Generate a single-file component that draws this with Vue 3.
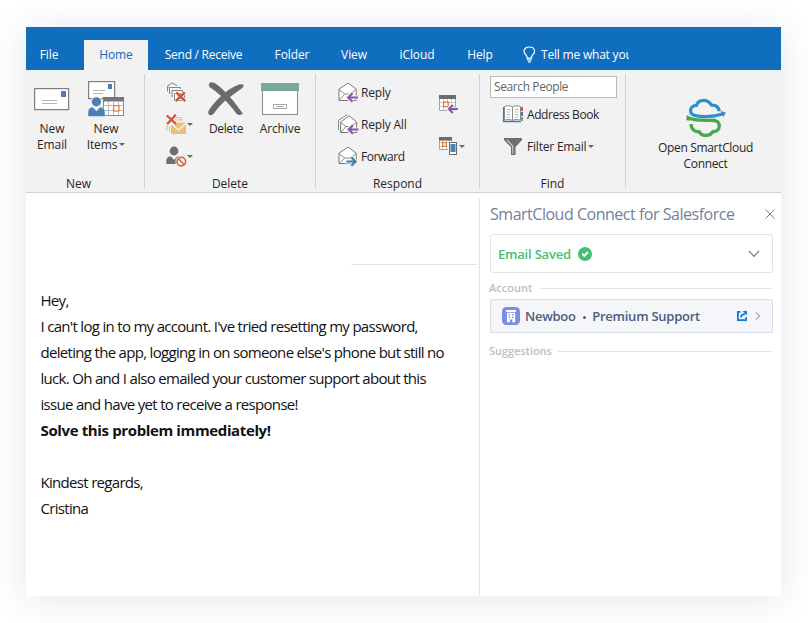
<script setup>
const tabs = [
  { label: 'File', width: 46, cls: '' },
  { label: 'Home', width: 64, cls: 'active' },
  { label: 'Send / Receive', width: 111, cls: 'long' },
  { label: 'Folder', width: 66, cls: '' },
  { label: 'View', width: 58, cls: '' },
  { label: 'iCloud', width: 68, cls: '' },
  { label: 'Help', width: 58, cls: '' },
]
const body = [
  'Hey,',
  "I can't log in to my account. I've tried resetting my password,",
  "deleting the app, logging in on someone else's phone but still no",
  'luck. Oh and I also emailed your customer support about this',
  'issue and have yet to receive a response!',
]
</script>

<template>
  <div class="stage">
  <div class="window">
    <header class="titlebar">
      <nav class="tabs">
        <span v-for="t in tabs" :key="t.label" class="tab" :class="t.cls" :style="{ width: t.width + 'px' }">{{ t.label }}</span>
      </nav>
      <div class="tell">
        <svg width="13" height="17" viewBox="0 0 13 17" fill="none" stroke="#fff">
          <path d="M4 12.2V10.6C3.6 9.2 1 8 1 5.3C1 2.7 3.3 1 6.3 1S11.6 2.7 11.6 5.3C11.6 8 9 9.2 8.6 10.6V12.2Z" stroke-width="1.2" />
          <path d="M4 13.9H8.6M5 15.9H7.8" stroke-width="1.1" />
        </svg>
        <span class="tell-text">Tell me what you</span>
      </div>
    </header>

    <section class="ribbon">
      <div class="group g-new">
        <div class="tools">
          <div class="big new-email">
            <svg width="36" height="40" viewBox="0 0 36 40">
              <rect x="0.6" y="11.6" width="34" height="21" fill="#fff" stroke="#7f7f7f" stroke-width="1.2" />
              <rect x="27" y="14" width="5" height="6" fill="#4a7fb8" />
              <path d="M8 23.5H23M8 26.5H23" stroke="#b5b5b5" />
            </svg>
            <span>New<br />Email</span>
          </div>
          <div class="big new-items">
            <svg width="37" height="40" viewBox="0 0 37 40">
              <rect x="0.6" y="4.6" width="26" height="17" fill="#fff" stroke="#7f7f7f" stroke-width="1.2" />
              <rect x="20" y="7" width="4" height="5" fill="#4a7fb8" />
              <path d="M5 13.5H17M5 16.5H15" stroke="#b5b5b5" />
              <circle cx="8.5" cy="25" r="5.8" fill="#f2f2f2" />
              <circle cx="8.4" cy="24.8" r="4.6" fill="#4a7fb8" />
              <rect x="15.5" y="20.5" width="20" height="18" fill="#fff" stroke="#8a8a8a" />
              <path d="M15 20H36V24.5H15Z" fill="#777" />
              <path d="M20.5 24V38M25.5 24V38M30.5 24V38M16 28.5H35M16 33.5H35" stroke="#b9b9b9" />
              <rect x="25.6" y="28.6" width="5.4" height="5.4" fill="#fff" stroke="#e2813c" stroke-width="1.3" />
              <path d="M0 39.5V35C0 32 2 30.3 4.8 30L8.5 34L12.2 30C15 30.3 17 32 17 35V39.5Z" fill="#4a7fb8" stroke="#f2f2f2" stroke-width="0.5" />
            </svg>
            <span>New<br />Items<i class="caret"></i></span>
          </div>
        </div>
        <div class="caption">New</div>
      </div>

      <div class="group g-delete">
        <div class="tools">
          <div class="smallcol">
            <div class="small">
              <svg width="21" height="21" viewBox="0 0 21 21" fill="none" stroke="#858585">
                <path d="M1.5 9.5V4L6 1L11 3.5M1.5 4.5L3 5.5" />
                <path d="M3.5 12V5.5H14.5V7M6 15V8.5H16.5V10" />
                <path d="M18.5 11.5H8.5V18.5H18.5Z" fill="#fff" />
                <path d="M10.5 10.5L19 19M18.5 10.5L10 19" stroke="#f2f2f2" stroke-width="3.8" />
                <path d="M10.3 10.3L19.2 19.2M18.7 10.3L9.8 19.2" stroke="#d6502e" stroke-width="2.5" />
              </svg>
            </div>
            <div class="small">
              <svg width="21" height="21" viewBox="0 0 21 21">
                <path d="M1 10V16.5M3.5 12V18M9 3.5H15V6M9 6H17" fill="none" stroke="#e7bd74" />
                <path d="M5 8.5H20V20H5Z" fill="#e9c07b" />
                <path d="M5 9.5L12.5 16L20 9.5" fill="none" stroke="#fff5e3" stroke-width="1.2" />
                <path d="M1 2L10 10M9.5 1L1.5 10" stroke="#f2f2f2" stroke-width="4" />
                <path d="M.8 1.5L10 10M9.8 .8L1.2 10" stroke="#d6502e" stroke-width="2.2" />
              </svg>
              <i class="caret"></i>
            </div>
            <div class="small">
              <svg width="21" height="21" viewBox="0 0 21 21">
                <circle cx="8" cy="5" r="4.4" fill="#6e6e6e" />
                <path d="M.3 18V14.5C.3 11.5 2.3 10.5 4.8 10.2L8 14L11.2 10.2C14 10.5 15.5 11.5 15.5 14.5V18Z" fill="#6e6e6e" />
                <circle cx="15.3" cy="15.6" r="5.9" fill="#f2f2f2" />
                <circle cx="15.3" cy="15.6" r="4.3" fill="none" stroke="#dc6144" stroke-width="1.6" />
                <path d="M12.2 12.5L18.4 18.7" stroke="#dc6144" stroke-width="1.6" />
              </svg>
              <i class="caret"></i>
            </div>
          </div>
          <div class="big delete">
            <svg width="37" height="40" viewBox="0 0 37 40" fill="#6b6b6b">
              <path d="M1.3 6.2C3 4.6 5.8 5.4 8.4 7.2C17.4 13.6 26 24 35 36.8C32.8 38.2 30.2 38.4 28.3 36.4C20.5 26 12.6 17.5 2.4 10.8C1 9.8.2 7.8 1.3 6.2Z" />
              <path d="M35.6 8.2C35.9 10 34 11.3 31.2 13.2C20.4 20.8 13 26.2 6.4 35.8C4.8 38.4 2 39 .7 37.2C-.4 35.6.6 33.6 2 31.6C10.3 20.2 20.5 11.6 31 7.6C33 6.9 35.2 7 35.6 8.2Z" />
            </svg>
            <span>Delete</span>
          </div>
          <div class="big archive">
            <svg width="38" height="40" viewBox="0 0 38 40">
              <rect x="1.5" y="12.5" width="35" height="25" fill="#fff" stroke="#8b8b8b" />
              <rect x="0" y="6" width="38" height="8" fill="#7aa899" />
              <rect x="12.5" y="27.5" width="13" height="4" fill="#fff" stroke="#aaa" />
              <path d="M15 29.5H23" stroke="#b5b5b5" />
            </svg>
            <span>Archive</span>
          </div>
        </div>
        <div class="caption">Delete</div>
      </div>

      <div class="group g-respond">
        <div class="tools">
          <div class="rows">
            <div class="row">
              <svg width="20" height="21" viewBox="0 0 20 21">
                <path d="M1 7.2L10 1L18.2 7.2V18.5H1Z" fill="#fff" stroke="#777" />
                <path d="M1.2 7.5L6.8 12.3M18 7.5L12 12.3M1.2 18.3L6.8 12H12.5" fill="none" stroke="#888" />
                <path d="M9.5 15.5H20M14.5 10.8L9.8 15.5L14.5 20.2" fill="none" stroke="#f2f2f2" stroke-width="4" />
                <path d="M10.5 15.5H20M14.5 11.3L10.3 15.5L14.5 19.7" fill="none" stroke="#8857ae" stroke-width="2.2" />
              </svg>
              <span class="t-reply">Reply</span>
            </div>
            <div class="row">
              <svg width="20" height="21" viewBox="0 0 20 21">
                <path d="M.5 16V6.2L9 .7" fill="none" stroke="#888" />
                <path d="M2.6 8.2L11 1.8L18.6 7.8V18.5H2.6Z" fill="#fff" stroke="#777" />
                <path d="M2.8 8.5L8 12.8M18.4 8.5L13 12.6M2.8 18.3L8 12.5H13" fill="none" stroke="#888" />
                <path d="M10 15.5H20M14.5 10.8L10.2 15.5L14.5 20.2" fill="none" stroke="#f2f2f2" stroke-width="4" />
                <path d="M11 15.5H20.5M15 11.3L10.8 15.5L15 19.7" fill="none" stroke="#8857ae" stroke-width="2.2" />
              </svg>
              <span class="t-all">Reply All</span>
            </div>
            <div class="row">
              <svg width="20" height="21" viewBox="0 0 20 21">
                <path d="M1 7.2L10 1L18.2 7.2V17.5H1Z" fill="#fff" stroke="#777" />
                <path d="M1.2 7.5L6.8 12.3M18 7.5L12 12.3M1.2 17.3L6.8 12H12.5" fill="none" stroke="#888" />
                <path d="M7.5 15.5H17.5M13 10.8L17.7 15.5L13 20.2" fill="none" stroke="#f2f2f2" stroke-width="4" />
                <path d="M8.5 15.5H17.5M13.3 11.3L17.5 15.5L13.3 19.7" fill="none" stroke="#3f7cb5" stroke-width="2.2" />
              </svg>
              <span class="t-forward">Forward</span>
            </div>
          </div>
          <div class="minis">
            <svg width="19" height="19" viewBox="0 0 19 19">
              <path d="M.5 3.5H16.5V15.5H.5Z" fill="#fff" stroke="#a5a5a5" />
              <path d="M0 0H17V4H0Z" fill="#6b6b6b" />
              <path d="M4.5 4V15M8.5 4V15M12.5 4V15M1 7.5H16M1 11.5H16" stroke="#c6c6c6" />
              <rect x="4.6" y="7" width="4.6" height="4.6" fill="#fff" stroke="#e07a2e" stroke-width="1.3" />
              <path d="M9 14H19M13.5 9.5L9 14L13.5 18.5" fill="none" stroke="#f2f2f2" stroke-width="3.6" />
              <path d="M10 14H19M13.8 10L9.8 14L13.8 18" fill="none" stroke="#8857ae" stroke-width="2.1" />
            </svg>
            <div class="mini-row">
              <svg width="19" height="19" viewBox="0 0 19 19">
                <path d="M.5 3H12.5V12.5H.5Z" fill="#fff" stroke="#a5a5a5" />
                <path d="M0 0H13V3.5H0Z" fill="#6b6b6b" />
                <path d="M3.5 4V12M7.5 4V12M1 5.5H12M1 9.5H12" stroke="#c6c6c6" />
                <rect x="3.6" y="5.6" width="3.6" height="3.6" fill="#fff" stroke="#e07a2e" stroke-width="1.2" />
                <rect x="9.2" y="4.2" width="9.4" height="14.4" fill="#f2f2f2" />
                <rect x="10.5" y="5.5" width="7" height="12" fill="#fff" stroke="#6b6b6b" />
                <rect x="11.5" y="7" width="5" height="8" fill="#4a7fb8" />
              </svg>
              <i class="caret"></i>
            </div>
          </div>
        </div>
        <div class="caption">Respond</div>
      </div>

      <div class="group g-find">
        <div class="find-tools">
          <div class="search">Search People</div>
          <div class="row">
            <svg width="20" height="19" viewBox="0 0 20 19">
              <path d="M.6 2V16.5H18" fill="none" stroke="#3f7cb5" stroke-width="1.4" />
              <path d="M1.5 1.5C4 .5 8 .5 9.5 2C11 .5 15 .5 17.5 1.5V15C15 14.3 11 14.3 9.5 15.5C8 14.3 4 14.3 1.5 15Z" fill="#fff" stroke="#8a8a8a" />
              <path d="M9.5 2V15.5" stroke="#8a8a8a" />
              <path d="M3.5 4.5H7.5M3.5 7H7.5M3.5 9.5H7.5M3.5 12H7.5M11.5 4.5H15.5M11.5 7H15.5M11.5 9.5H15.5M11.5 12H15.5" stroke="#b5b5b5" stroke-width=".9" />
              <path d="M18 2H20V6H18Z" fill="#d6502e" />
              <path d="M18 7H20V11H18Z" fill="#3f7cb5" />
              <path d="M18 12H20V16H18Z" fill="#5aa98b" />
            </svg>
            <span class="t-book">Address Book</span>
          </div>
          <div class="row">
            <svg width="20" height="19" viewBox="0 0 20 19">
              <path d="M1 1H19V3L12.5 10V18H8V10L1 3Z" fill="#6e6e6e" />
              <path d="M4 2.8L9.8 9.2V16.8" fill="none" stroke="#d5d5d5" stroke-width="1.1" />
            </svg>
            <span class="t-filter">Filter Email<i class="caret"></i></span>
          </div>
        </div>
        <div class="caption">Find</div>
      </div>

      <div class="group g-scc">
        <svg width="42" height="40" viewBox="0 0 42 40" fill="none" stroke-width="3.3" stroke-linejoin="round">
          <path d="M34.2 13.2C33.6 9.2 30.8 7 26.5 7.2C24.5 3.8 21.8 2.4 18.8 2.4C15.2 2.4 12.4 4.3 11.6 7.4C8 7.5 5.5 9.5 5.5 12.7C5.5 16.4 9 17.8 15 18.3C22 18.9 30 18.6 37.5 16" stroke="#2b93c7" />
          <path d="M35.8 13.1L40.8 14.6L38.4 19.2L38 17.8L36.8 18Z" fill="#2b93c7" />
          <path d="M4 20C11 22.9 17 22.5 25 22.3C31 22 34.3 23.6 34.3 28C34.3 31.7 31.5 33.9 27.8 33.6C26.4 36.1 23.5 37.5 20 37.3C17.4 37.2 15.3 35.8 14.2 33.7C9.7 34 6.2 31.5 6.1 26" stroke="#48a550" />
          <path d="M1.2 22L1.8 17L6 19.5L4.6 20.7L4.5 23Z" fill="#48a550" />
        </svg>
        <span>Open SmartCloud<br />Connect</span>
      </div>
    </section>

    <main class="content">
      <article class="mail">
        <div class="rule"></div>
        <div class="message">
          <p v-for="line in body" :key="line">{{ line }}</p>
          <p class="strong">Solve this problem immediately!</p>
          <p class="gap">Kindest regards,</p>
          <p>Cristina</p>
        </div>
      </article>

      <aside class="panel">
        <div class="panel-head">
          <h1>SmartCloud Connect for Salesforce</h1>
          <svg width="10" height="10" viewBox="0 0 10 10" stroke="#71819b" stroke-width="1"><path d="M.5 .5L9.5 9.5M9.5 .5L.5 9.5" /></svg>
        </div>
        <div class="saved">
          <span>Email Saved</span>
          <svg width="14" height="14" viewBox="0 0 14 14"><circle cx="7" cy="7" r="7" fill="#45bf74" /><path d="M4.2 6.8L6.3 8.8L9.9 5" fill="none" stroke="#fff" stroke-width="1.9" /></svg>
          <svg class="end" width="12" height="8" viewBox="0 0 12 8" fill="none" stroke="#71819b" stroke-width="1.2"><path d="M1 1L6 6.3L11 1" /></svg>
        </div>
        <div class="section account"><span>Account</span></div>
        <div class="record">
          <svg width="18" height="18" viewBox="0 0 18 18">
            <rect width="18" height="18" rx="4.5" fill="#7f8de1" />
            <path d="M4 3H14V5H4ZM5 5.8H13.2V15.2H10.3V12.5H7.8V15.2H5Z" fill="#fff" />
            <path d="M6.6 7H8V8.5H6.6ZM10 7H11.4V8.5H10ZM6.6 9.8H8V11.2H6.6ZM10 9.8H11.4V11.2H10Z" fill="#7f8de1" />
          </svg>
          <span class="name">Newboo</span><i class="dot"></i><span class="tier">Premium Support</span>
          <svg class="open" width="10" height="10" viewBox="0 0 10 10" fill="none" stroke="#0b7bd8" stroke-width="1.8">
            <path d="M3.5 .9H.9V9.1H9.1V6.3" />
            <path d="M4 6.4C4 4.3 5 3.2 8 3.1" />
            <path d="M5.6 0H10V4.6Z" fill="#0b7bd8" stroke="none" />
          </svg>
          <svg width="6" height="8" viewBox="0 0 6 8" fill="none" stroke="#71819b"><path d="M.8 .5L4.8 4L.8 7.5" /></svg>
        </div>
        <div class="section suggestions"><span>Suggestions</span></div>
      </aside>
    </main>
  </div>
  </div>
</template>

<style>
body {
  background: #fff;
}
</style>

<style scoped>
* {
  box-sizing: border-box;
}
svg {
  display: block;
  flex: none;
  overflow: visible;
}
.stage {
  width: 808px;
  height: 623px;
  padding: 27px 0 0 26px;
  overflow: hidden;
}
.window {
  width: 755px;
  height: 569px;
  display: flex;
  flex-direction: column;
  background: #fff;
  box-shadow: 0 3px 36px rgba(50, 65, 105, 0.13);
  font-family: "Open Sans", "Noto Sans", sans-serif;
  font-size: 12px;
  color: #262626;
  white-space: nowrap;
}
.titlebar {
  height: 43px;
  flex: none;
  background: #106ebe;
  display: flex;
  align-items: flex-end;
  color: #fff;
}
.tabs {
  display: flex;
}
.tab {
  height: 30px;
  line-height: 30px;
  text-align: center;
  letter-spacing: -0.1px;
}
.tab.long {
  letter-spacing: -0.25px;
}
.tab:first-child {
  margin-right: 12px;
}
.tab.active {
  background: #f2f2f2;
  color: #106ebe;
}
.tell {
  height: 30px;
  display: flex;
  align-items: center;
  gap: 5px;
  margin-left: 14px;
}
.tell svg {
  margin-top: -2px;
}
.tell-text {
  width: 88px;
  line-height: 30px;
  overflow: hidden;
  letter-spacing: -0.2px;
}
.ribbon {
  height: 123px;
  flex: none;
  display: flex;
  padding: 4px 0;
  background: #f2f2f2;
  border-bottom: 1px solid #d2d2d2;
}
.group {
  height: 114px;
  display: flex;
  flex-direction: column;
  border-right: 1px solid #d2d2d2;
}
.g-new { width: 119px; }
.g-delete { width: 171px; }
.g-respond { width: 164px; }
.g-find { width: 146px; }
.g-scc {
  width: 155px;
  border-right: 0;
  align-items: center;
  padding: 24px 0 0 4px;
  text-align: center;
  line-height: 16px;
  letter-spacing: -0.33px;
}
.g-scc span {
  margin-top: 2px;
}
.tools {
  height: 102px;
  flex: none;
  display: flex;
}
.caption {
  height: 12px;
  flex: none;
  line-height: 16px;
  text-align: center;
}
.g-new .caption {
  padding-right: 13px;
}
.big {
  display: flex;
  flex-direction: column;
  align-items: center;
  text-align: center;
  line-height: 16px;
  padding-top: 3px;
  letter-spacing: -0.1px;
}
.big span {
  margin-top: 4px;
}
.new-email {
  width: 52px;
}
.new-items {
  width: 56px;
}
.caret {
  display: inline-block;
  width: 0;
  height: 0;
  border: 3px solid transparent;
  border-top-color: #666;
  border-bottom: 0;
  margin-left: 2px;
  vertical-align: 3px;
}
.smallcol {
  width: 58px;
  padding: 8px 0 0 21px;
  display: flex;
  flex-direction: column;
  gap: 11px;
}
.small {
  display: flex;
  align-items: center;
}
.small .caret {
  margin-left: 0;
}
.delete {
  width: 46px;
  letter-spacing: -0.35px;
}
.archive {
  width: 62px;
}
.rows {
  width: 123px;
  padding: 8px 0 0 22px;
  display: flex;
  flex-direction: column;
  gap: 11px;
}
.row {
  height: 21px;
  display: flex;
  align-items: center;
  gap: 3px;
}
.t-reply,
.t-all,
.t-filter {
  letter-spacing: -0.2px;
}
.t-forward,
.t-book {
  letter-spacing: -0.42px;
}
.minis {
  padding-top: 21px;
  display: flex;
  flex-direction: column;
  gap: 23px;
}
.mini-row {
  display: flex;
  align-items: center;
}
.mini-row .caret {
  margin-left: 1px;
}
.find-tools {
  height: 102px;
  flex: none;
  padding: 2px 0 0 10px;
}
.search {
  width: 127px;
  height: 22px;
  border: 1px solid #b9b9b9;
  background: #fff;
  padding-left: 3px;
  line-height: 20px;
  letter-spacing: -0.4px;
  color: #666;
}
.find-tools .row {
  margin: 6px 0 0 13px;
  gap: 4px;
}
.find-tools .row + .row {
  margin-top: 11px;
}
.content {
  flex: 1;
  display: flex;
}
.mail {
  width: 453px;
}
.rule {
  width: 126px;
  height: 1px;
  margin: 71px 0 0 325px;
  background: #e1e1e1;
}
.message {
  padding: 22px 0 0 14.5px;
  font-size: 15px;
  line-height: 26px;
  letter-spacing: -0.69px;
  color: #111;
}
p {
  margin: 0;
}
.strong {
  font-weight: 700;
  letter-spacing: -0.37px;
}
.gap {
  margin-top: 26px;
}
.panel {
  width: 302px;
  height: 397px;
  margin-top: 5px;
  padding: 0 6.5px 0 10px;
  border-left: 1px solid #e2e3e5;
}
.panel-head {
  height: 31px;
  display: flex;
  align-items: center;
  justify-content: space-between;
}
h1 {
  margin: 0;
  font-size: 16px;
  font-weight: 400;
  letter-spacing: -0.48px;
  color: #71819b;
}
.saved {
  width: 283px;
  height: 39px;
  margin-top: 5px;
  padding: 0 12px 0 7px;
  display: flex;
  align-items: center;
  gap: 7.5px;
  border: 1px solid #e0e2e6;
  border-radius: 3px;
  font-size: 13px;
  font-weight: 600;
  letter-spacing: -0.2px;
  color: #45bf74;
}
.end {
  margin-left: auto;
}
.section {
  width: 283px;
  height: 16px;
  display: flex;
  align-items: center;
  gap: 8px;
  margin-left: -1px;
  font-size: 11px;
  font-weight: 600;
  color: #b9bfc8;
}
.section::after {
  content: "";
  flex: 1;
  height: 1px;
  margin-top: 3px;
  background: #dfe3ea;
}
.account {
  margin-top: 6px;
}
.suggestions {
  margin-top: 9px;
  letter-spacing: -0.05px;
  gap: 6px;
}
.record {
  width: 283px;
  height: 34px;
  margin-top: 4px;
  padding: 0 11px;
  display: flex;
  align-items: center;
  border: 1px solid #d7dce4;
  border-radius: 3px 3px 0 0;
  background: #f4f6fa;
  font-size: 13px;
  font-weight: 600;
  letter-spacing: -0.25px;
  color: #4c5d7a;
}
.name {
  margin-left: 5px;
}
.dot {
  width: 3px;
  height: 3px;
  border-radius: 50%;
  margin: 2px 6px 0 7.5px;
  background: #4c5d7a;
}
.open {
  margin: 0 8px 0 auto;
}
</style>
